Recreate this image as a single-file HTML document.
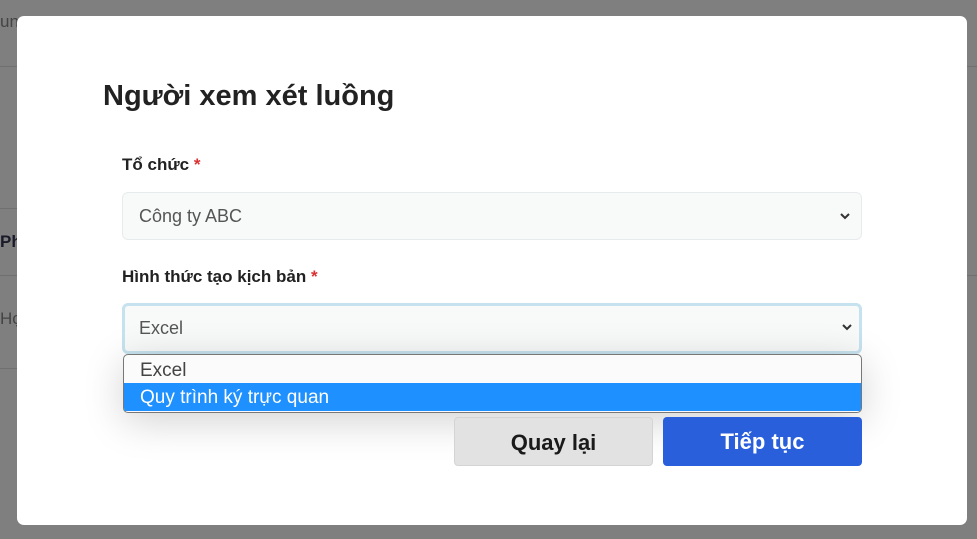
<!DOCTYPE html>
<html><head><meta charset="utf-8"><style>
*{box-sizing:border-box;margin:0;padding:0}
body{width:977px;height:539px;overflow:hidden;background:#7f7f7f;font-family:"Liberation Sans","DejaVu Sans",sans-serif;position:relative}
.bgline{position:absolute;left:0;width:977px;height:1px;background:#6f6f6f}
.modal{position:absolute;left:17px;top:16px;width:950px;height:509px;background:#fff;border-radius:7px}
.abs{position:absolute}
h1{position:absolute;left:86px;top:64px;font-size:29px;font-weight:bold;color:#222;letter-spacing:0}
.lbl{position:absolute;left:105px;font-size:17px;font-weight:bold;color:#222}
.lbl span{color:#d93030}
.sel{position:absolute;left:105px;width:740px;height:48px;background:#f8f9f9;border:1px solid #e8ebec;border-radius:6px;font-size:18px;color:#555;padding:13px 0 0 16px}
.chev{position:absolute;right:10px;top:18px}
.dd{position:absolute;left:106px;top:338px;width:739px;height:59px;background:#fbfbfb;border:1px solid #777;border-radius:5px;box-shadow:0 8px 40px rgba(0,0,0,.18);overflow:hidden;font-size:19px}
.dd div{height:28px;padding:5px 0 0 16px;color:#444}
.dd .hi{background:#1e90ff;color:#fff;padding-top:4px}
.btn{position:absolute;top:401px;width:199px;height:49px;border-radius:4px;font-size:22px;font-weight:bold;text-align:center;line-height:49px}
</style></head><body>
<div class="bgline" style="top:66px"></div>
<div class="bgline" style="top:208px;width:17px"></div>
<div class="bgline" style="top:275px;width:17px"></div>
<div class="bgline" style="top:368px;width:17px"></div>
<div class="abs" style="left:0;top:232px;font-size:17px;font-weight:bold;color:#1a1a2a">Ph</div>
<div class="abs" style="left:0;top:309px;font-size:17px;color:#444">Họ</div>
<div class="abs" style="left:0;top:12px;font-size:17px;color:#444">un</div>
<div class="abs" style="left:967px;top:66px;width:10px;height:1px;background:#6f6f6f"></div>
<div class="abs" style="left:967px;top:275px;width:10px;height:1px;background:#6f6f6f"></div>
<div class="modal">
<h1>Người xem xét luồng</h1>
<div class="lbl" style="top:139px">Tổ chức <span>*</span></div>
<div class="sel" style="top:176px">Công ty ABC<svg class="chev" width="12" height="10" viewBox="0 0 12 10"><path d="M2 3l4 4 4-4" stroke="#333" stroke-width="2" fill="none"/></svg></div>
<div class="lbl" style="top:251px">Hình thức tạo kịch bản <span>*</span></div>
<div class="sel" style="top:287px;height:51px;border:3px solid #c6e2ee;padding-left:14px;padding-top:12px">Excel<svg class="chev" style="right:6px;top:16px" width="12" height="10" viewBox="0 0 12 10"><path d="M2 3l4 4 4-4" stroke="#333" stroke-width="2" fill="none"/></svg></div>
<div class="dd"><div>Excel</div><div class="hi">Quy trình ký trực quan</div></div>
<div class="btn" style="left:437px;background:#e2e2e2;border:1px solid #d4d4d4;color:#1a1a1a">Quay lại</div>
<div class="btn" style="left:646px;background:#2a5fdc;color:#fff">Tiếp tục</div>
</div>
</body></html>
